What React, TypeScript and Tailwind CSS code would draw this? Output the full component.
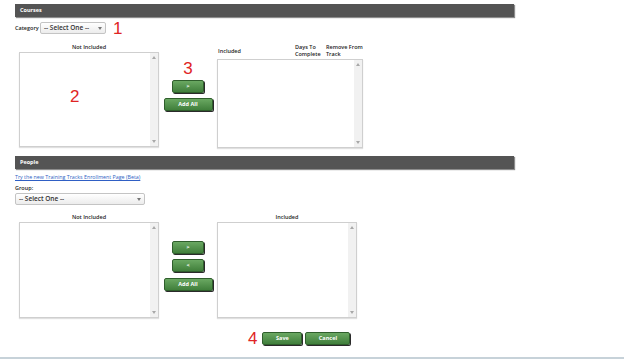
import type { ReactNode } from "react";

function SectionBar({ title }: { title: string }) {
  return (
    <div className="ml-[15px] w-[499px] h-[13px] bg-[#545454] shadow-[1px_1px_1px_rgba(0,0,0,0.45)] flex items-center pl-[5px]">
      <span className="text-[5.5px] font-bold text-white">{title}</span>
    </div>
  );
}

function ListBox({ w, h }: { w: number; h: number }) {
  return (
    <div
      className="flex border border-[#cfcfcf] bg-white shadow-[0_1px_1px_rgba(0,0,0,0.12)]"
      style={{ width: w, height: h }}
    >
      <div className="flex-1" />
      <div className="w-[8px] h-full bg-[#f1f1f1] flex flex-col items-center justify-between py-[3px]">
        <svg width="4" height="3" viewBox="0 0 4 3">
          <path d="M2 0 L4 3 L0 3 Z" fill="#a8a8a8" />
        </svg>
        <svg width="4" height="3" viewBox="0 0 4 3">
          <path d="M0 0 L4 0 L2 3 Z" fill="#a8a8a8" />
        </svg>
      </div>
    </div>
  );
}

function GreenButton({ w, children }: { w: number; children: ReactNode }) {
  return (
    <button
      className="h-[13px] rounded-[2px] border border-[#2f5e2c] bg-gradient-to-b from-[#6aa862] to-[#407f3b] shadow-[1px_1px_0_#2a2a2a] text-white text-[5.5px] font-bold flex items-center justify-center leading-none"
      style={{ width: w }}
    >
      {children}
    </button>
  );
}

function SelectBox({ w, children }: { w: number; children: ReactNode }) {
  return (
    <div
      className="h-[12px] rounded-[2px] border border-[#c4c4c4] bg-gradient-to-b from-white to-[#ececec] flex items-center justify-between px-[3px]"
      style={{ width: w }}
    >
      <span className="text-[6.5px] font-semibold text-[#333] leading-none">{children}</span>
      <svg width="4" height="3" viewBox="0 0 4 3">
        <path d="M0 0 L4 0 L2 3 Z" fill="#777" />
      </svg>
    </div>
  );
}

function RedNum({ n }: { n: string }) {
  return (
    <span className="text-[17px] leading-[18px] text-[#e02424] font-['Liberation_Sans',Arial,sans-serif]">
      {n}
    </span>
  );
}

export default function App() {
  return (
    <div className="w-[624px] h-[361px] bg-white overflow-hidden font-['Open_Sans',sans-serif] text-[#222]">
      <div className="h-[4px]" />
      <SectionBar title="Courses" />

      <div className="mt-[3px] h-[16px] ml-[15px] flex items-center">
        <span className="text-[5.5px] font-semibold w-[25px]">Category</span>
        <SelectBox w={66}>-- Select One --</SelectBox>
        <span className="ml-[7px]">
          <RedNum n="1" />
        </span>
      </div>

      <div className="flex pl-[19px]">
        <div className="w-[140px] pt-[7px]">
          <div className="h-[9px] text-center text-[5.5px] font-semibold leading-[9px]">Not Included</div>
          <div className="relative">
            <ListBox w={140} h={95} />
            <span className="absolute left-[51px] top-[32px]">
              <RedNum n="2" />
            </span>
          </div>
        </div>

        <div className="w-[58px] pt-[24px] flex flex-col items-center">
          <RedNum n="3" />
          <div className="mt-[2px]">
            <GreenButton w={32}>&gt;</GreenButton>
          </div>
          <div className="mt-[5px]">
            <GreenButton w={49}>Add All</GreenButton>
          </div>
        </div>

        <div className="w-[146px] pt-[8px]">
          <div className="h-[15px] flex items-end text-[5.5px] font-semibold leading-[7px]">
            <span className="w-[78px] pl-[1px] pb-[4px]">Included</span>
            <span className="w-[31px] pb-[1px]">
              Days To
              <br />
              Complete
            </span>
            <span className="pb-[1px]">
              Remove From
              <br />
              Track
            </span>
          </div>
          <ListBox w={146} h={89} />
        </div>
      </div>

      <div className="h-[8px]" />
      <SectionBar title="People" />

      <div className="ml-[15px] mt-[3px] h-[10px] text-[5.3px] leading-[10px]">
        <a href="#" className="text-[#2f5fc4] underline">
          Try the new Training Tracks Enrollment Page (Beta)
        </a>
      </div>
      <div className="ml-[15px] mt-[2px] h-[9px] leading-[9px] text-[5.5px] font-semibold">Group:</div>
      <div className="ml-[15px]">
        <SelectBox w={130}>-- Select One --</SelectBox>
      </div>

      <div className="flex pl-[19px]">
        <div className="w-[140px] pt-[8px]">
          <div className="h-[9px] text-center text-[5.5px] font-semibold leading-[9px]">Not Included</div>
          <ListBox w={140} h={96} />
        </div>

        <div className="w-[58px] pt-[36px] flex flex-col items-center">
          <GreenButton w={32}>&gt;</GreenButton>
          <div className="mt-[5px]">
            <GreenButton w={32}>&lt;</GreenButton>
          </div>
          <div className="mt-[6px]">
            <GreenButton w={49}>Add All</GreenButton>
          </div>
        </div>

        <div className="w-[140px] pt-[8px]">
          <div className="h-[9px] text-center text-[5.5px] font-semibold leading-[9px]">Included</div>
          <ListBox w={140} h={96} />
        </div>
      </div>

      <div className="mt-[14px] ml-[248px] flex items-center h-[13px]">
        <RedNum n="4" />
        <div className="ml-[5px]">
          <GreenButton w={40}>Save</GreenButton>
        </div>
        <div className="ml-[3px]">
          <GreenButton w={45}>Cancel</GreenButton>
        </div>
      </div>

      <div className="mt-[12px] h-[2px] bg-[#c7d2d9]" />
    </div>
  );
}
